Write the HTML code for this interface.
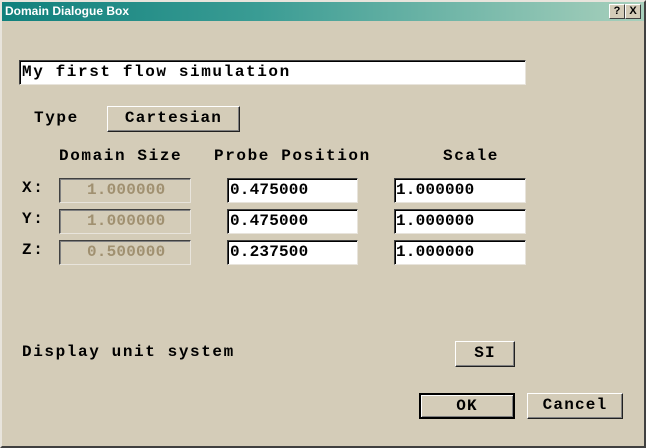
<!DOCTYPE html>
<html><head><style>
body{margin:0;width:646px;height:448px;overflow:hidden;background:#d4ccb8;font-family:"Liberation Mono",monospace;}
.win{position:absolute;left:0;top:0;width:642px;height:444px;border:2px solid;border-color:#e8e4dc #404040 #404040 #e8e4dc;background:#d4ccb8;}
.title{position:absolute;left:2px;top:2px;width:642px;height:19px;background:linear-gradient(90deg,#10807c,#3a9c94 40%,#a8d0bc);color:#fff;font:bold 12px "Liberation Sans",sans-serif;line-height:19px;padding-left:3px;box-sizing:border-box}
.tb{position:absolute;top:4px;width:14px;height:13px;background:#d4ccb8;border:1px solid;border-color:#fff #404040 #404040 #fff;font:bold 11px "Liberation Sans",sans-serif;line-height:13px;text-align:center;color:#000}
.t{position:absolute;font-weight:bold;font-size:16px;letter-spacing:1.6px;color:#000;white-space:nowrap;line-height:20px}
.f{position:absolute;background:#fff;border:1px solid;border-color:#404040 #e8e4dc #e8e4dc #404040;box-shadow:inset 1px 1px 0 #000;box-sizing:border-box;font-weight:bold;font-size:16px;letter-spacing:0.2px;line-height:23px;padding-left:2px;white-space:nowrap}
.d{background:#d4ccb8;color:#a09070;padding-left:27px;box-shadow:inset 1px 1px 0 #808080}
.b{position:absolute;border:1px solid;border-color:#fff #202020 #202020 #fff;box-shadow:inset -1px -1px 0 #808080;box-sizing:border-box;text-align:center;font-weight:bold;font-size:16px;letter-spacing:1.2px;line-height:23px}
</style></head><body>
<div class="win"></div>
<div class="title">Domain Dialogue Box</div>
<div class="tb" style="left:609px">?</div><div class="tb" style="left:625px">X</div>
<div class="f" style="left:19px;top:60px;width:507px;height:25px;letter-spacing:1.6px">My first flow simulation</div>
<div class="t" style="left:34px;top:108px">Type</div>
<div class="b" style="left:107px;top:106px;width:133px;height:26px">Cartesian</div>
<div class="t" style="left:59px;top:146px">Domain Size</div>
<div class="t" style="left:214px;top:146px">Probe Position</div>
<div class="t" style="left:443px;top:146px">Scale</div>
<div class="t" style="left:22px;top:178px">X:</div>
<div class="t" style="left:22px;top:209px">Y:</div>
<div class="t" style="left:22px;top:240px">Z:</div>
<div class="f d" style="left:59px;top:178px;width:132px;height:25px">1.000000</div>
<div class="f d" style="left:59px;top:209px;width:132px;height:25px">1.000000</div>
<div class="f d" style="left:59px;top:240px;width:132px;height:25px">0.500000</div>
<div class="f" style="left:227px;top:178px;width:131px;height:25px">0.475000</div>
<div class="f" style="left:227px;top:209px;width:131px;height:25px">0.475000</div>
<div class="f" style="left:227px;top:240px;width:131px;height:25px">0.237500</div>
<div class="f" style="left:394px;top:178px;width:132px;height:25px;padding-left:1px">1.000000</div>
<div class="f" style="left:394px;top:209px;width:132px;height:25px;padding-left:1px">1.000000</div>
<div class="f" style="left:394px;top:240px;width:132px;height:25px;padding-left:1px">1.000000</div>
<div class="t" style="left:22px;top:342px">Display unit system</div>
<div class="b" style="left:455px;top:341px;width:60px;height:26px">SI</div>
<div class="b" style="left:419px;top:393px;width:96px;height:26px;border:2px solid #000;box-shadow:inset 1px 1px 0 #fff,inset -1px -1px 0 #808080;line-height:22px">OK</div>
<div class="b" style="left:527px;top:393px;width:96px;height:26px">Cancel</div>
</body></html>
